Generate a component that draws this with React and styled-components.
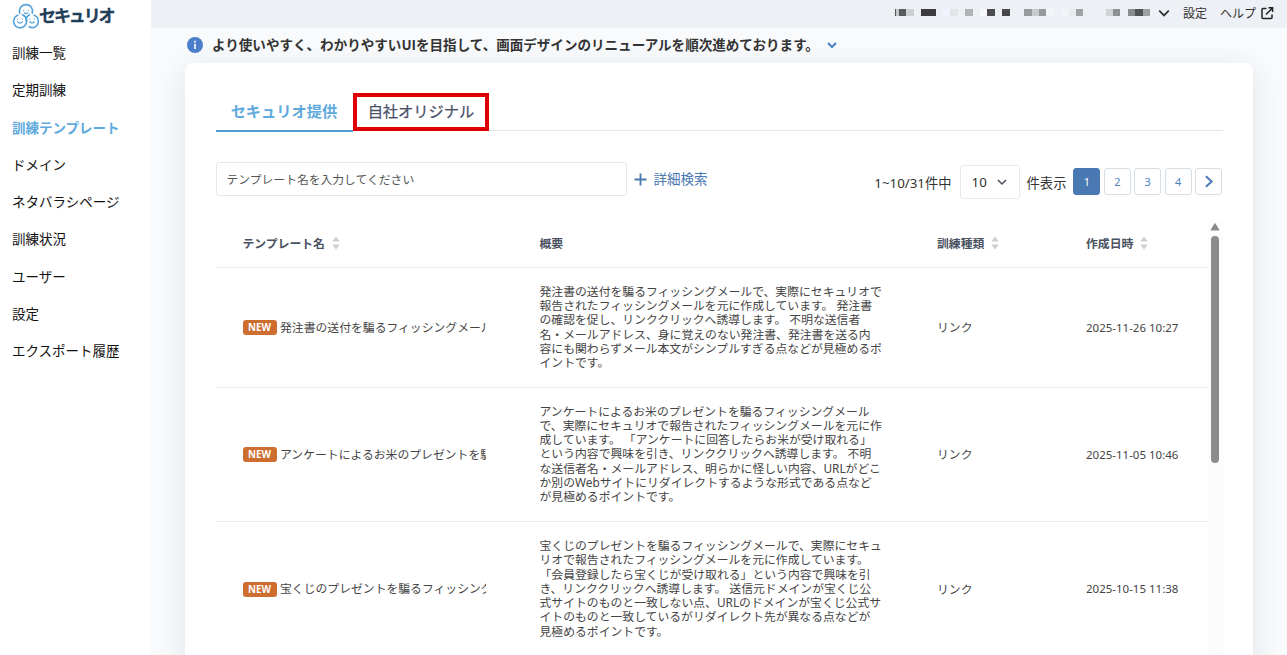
import React from "react";
import styled, { createGlobalStyle } from "styled-components";

const GlobalStyle = createGlobalStyle`
  * {
    box-sizing: border-box;
  }

  body {
    margin: 0;
    overflow: hidden;
    font-family: "Noto Sans", "Noto Sans CJK JP", sans-serif;
    color: #333;
    background-color: #f8fafc;
  }
`;

const Layout = styled.div`
  display: flex;
  height: 655px;
  overflow: hidden;
`;

const Sidebar = styled.aside`
  width: 151px;
  flex-shrink: 0;
  background-color: #fff;
`;

const Logo = styled.div`
  display: flex;
  align-items: center;
  height: 32px;
  padding: 0 0 1px 12px;
  color: #1f4059;
`;

const LogoText = styled.span`
  font-family: "Noto Sans CJK JP", sans-serif;
  font-size: 17px;
  font-weight: 700;
  letter-spacing: -2.1px;
  line-height: 24px;
  margin-left: -1px;
  padding-bottom: 2px;
  white-space: nowrap;
  -webkit-text-stroke: 0.3px #1f4059;
`;

const Nav = styled.nav`
  display: flex;
  flex-direction: column;
  padding: 2px 0 0 12px;
`;

const NavItem = styled.a`
  height: 37.25px;
  line-height: 37px;
  font-family: "Noto Sans CJK JP", sans-serif;
  font-size: 13.5px;
  font-weight: ${(props) => (props.$active ? 700 : 400)};
  color: ${(props) => (props.$active ? "#5faadd" : "#111")};
`;

const Main = styled.main`
  flex: 1;
  min-width: 0;
`;

const TopBar = styled.header`
  display: flex;
  align-items: center;
  justify-content: flex-end;
  height: 28px;
  padding: 0 13px 2px 0;
  font-size: 12px;
  line-height: 20px;
  background-color: #edf0f5;
`;

const Account = styled.div`
  display: flex;
  margin-right: 8px;
  padding-bottom: 1px;
`;

const Cell = styled.i`
  width: ${(props) => props.$w}px;
  height: 7px;
  background-color: ${(props) => props.$color};
`;

const TopLink = styled.a`
  margin: 0 ${(props) => (props.$external ? 4 : 0)}px 0 13px;
  padding-top: 1px;
`;

const Notice = styled.div`
  display: flex;
  align-items: center;
  height: 35px;
  padding: 0 0 1px 36px;
  font-size: 13.56px;
  font-weight: 700;
`;

const NoticeText = styled.span`
  margin: 0 8px 2px 9px;
  line-height: 20px;
  font-family: "Noto Sans CJK JP", sans-serif;
`;

const Card = styled.section`
  width: 1068px;
  height: 700px;
  margin-left: 34px;
  padding: 30px 31px 0 30.5px;
  border-radius: 8px;
  background-color: #fff;
  box-shadow: 0 6px 28px rgba(60, 80, 100, 0.12);
`;

const Tabs = styled.div`
  display: flex;
  height: 38px;
  width: 1007px;
  border-bottom: 1px solid #dfe6ec;
`;

const Tab = styled.button`
  width: ${(props) => (props.$marked ? 136 : 137)}px;
  height: ${(props) => (props.$marked ? 38 : 39)}px;
  padding: ${(props) => (props.$marked ? "0 0 4px 1px" : "0 0 3px")};
  border: ${(props) => (props.$marked ? "4px solid #e00000" : "none")};
  border-bottom: ${(props) => (props.$marked ? "4px solid #e00000" : "2px solid #4e9bd3")};
  background: none;
  font-family: "Noto Sans CJK JP", sans-serif;
  font-size: 15.25px;
  font-weight: ${(props) => (props.$marked ? 400 : 700)};
  -webkit-text-stroke: ${(props) => (props.$marked ? "0.25px #4a5068" : "0")};
  line-height: 20px;
  color: ${(props) => (props.$marked ? "#4a5068" : "#5faadd")};
`;

const Toolbar = styled.div`
  display: flex;
  align-items: center;
  width: 1007px;
  height: 38px;
  margin-top: 32px;
`;

const SearchInput = styled.input`
  width: 411px;
  height: 34px;
  margin-bottom: 6px;
  padding: 0 10px 2px;
  border: 1px solid #e4e9ee;
  border-radius: 3px;
  font-family: "Noto Sans CJK JP", sans-serif;
  font-size: 11.8px;

  &::placeholder {
    color: #555;
    opacity: 1;
  }
`;

const AdvancedLink = styled.a`
  display: flex;
  align-items: center;
  gap: 7px;
  margin: 0 auto 6px 7px;
  font-size: 13.5px;
  line-height: 20px;
  color: #4a78b0;
`;

const PageText = styled.span`
  padding-top: 1px;
  font-size: 13.3px;
  line-height: 20px;
`;

const PageSize = styled.div`
  display: flex;
  align-items: center;
  justify-content: space-between;
  width: 60px;
  height: 34px;
  margin: 0 7px 0 8px;
  padding: 0 12px 0 11px;
  border: 1px solid #e6eaef;
  border-radius: 3px;
  font-size: 13.3px;
`;

const Pages = styled.div`
  display: flex;
  gap: 3.4px;
  margin: 0 0.5px 1px 7px;
`;

const PageButton = styled.button`
  display: flex;
  align-items: center;
  justify-content: center;
  width: 27px;
  height: 27px;
  padding: 0;
  border: 1px solid ${(props) => (props.$active ? "#4a78b3" : "#d5dee5")};
  border-radius: 3px;
  font-family: "Noto Sans", sans-serif;
  font-size: 11px;
  color: ${(props) => (props.$active ? "#fff" : "#4f83c0")};
  background-color: ${(props) => (props.$active ? "#4a78b3" : "#fff")};
`;

const TableArea = styled.div`
  display: flex;
  width: 1007px;
  margin-top: 18px;
`;

const Table = styled.div`
  width: 992px;
`;

const Row = styled.div`
  display: grid;
  grid-template-columns: 324px 397.5px 149px 1fr;
  align-items: center;
  height: ${(props) => props.$height}px;
  border-bottom: 1px solid #e8eaec;
  font-size: 11.84px;
  color: #444;
`;

const HeadCell = styled.div`
  display: flex;
  align-items: center;
  gap: 7px;
  padding: 0 0 1px ${(props) => (props.$first ? 27 : 0)}px;
  font-family: "Noto Sans CJK JP", sans-serif;
  font-weight: 700;
  line-height: 18px;
  color: #4a5262;
`;

const NameCell = styled.div`
  display: flex;
  align-items: center;
  width: 270.5px;
  padding-left: 27px;
`;

const Badge = styled.span`
  width: 34px;
  height: 15px;
  margin-right: 3.5px;
  border-radius: 3px;
  flex-shrink: 0;
  background-color: #cd6d2f;
  color: #fff;
  font-size: 9.8px;
  font-weight: 700;
  line-height: 15px;
  text-align: center;
`;

const Name = styled.span`
  min-width: 0;
  padding-bottom: 2px;
  overflow: hidden;
  font-family: "Noto Sans CJK JP", sans-serif;
  line-height: 18px;
  white-space: nowrap;
`;

const Summary = styled.div`
  padding-bottom: 2px;
  line-height: 14.2px;
  white-space: pre;
`;

const Kind = styled.div`
  padding-bottom: 1px;
  line-height: 18px;
`;

const DateText = styled.div`
  font-size: 11.5px;
  line-height: 18px;
`;

const ScrollTrack = styled.div`
  display: flex;
  flex-direction: column;
  align-items: center;
  width: 15px;
  height: 460px;
  background-color: #fcfcfc;
`;

const ScrollThumb = styled.div`
  width: 8px;
  height: 227px;
  margin-top: 5px;
  border-radius: 4px;
  background-color: #8b8b8b;
`;

const navItems = [
  "訓練一覧",
  "定期訓練",
  "訓練テンプレート",
  "ドメイン",
  "ネタバラシページ",
  "訓練状況",
  "ユーザー",
  "設定",
  "エクスポート履歴",
];

// masked account name, one entry per block: [width, colour]
const maskCells = [
  [1, "#555"], [3, "#c4c6ca"], [7.4, "#58595c"], [7.4, "#cdcfd2"], [7, "#f0f1f4"],
  [15, "#3c3c3f"], [7.4, "#edf0f5"], [7.4, "#f1f5ff"], [7.4, "#e2e5e8"], [7.4, "#edf0f5"],
  [7.4, "#b0b2b5"], [7.4, "#edf0f5"], [7.4, "#f6f8fb"], [7.4, "#4d4d50"], [7.4, "#edf0f5"],
  [7.4, "#47474a"], [14.8, "#edf0f5"], [7.4, "#98999c"], [7.4, "#c8cacd"], [7.4, "#96999c"],
  [7.4, "#f2f5f8"], [7.4, "#edf0f5"], [7.4, "#f2f4fa"], [7.4, "#e9ebef"], [7.4, "#a1a2a5"],
  [22.2, "#eceff4"], [7.4, "#d0d2d6"], [7.4, "#8e9194"], [7.4, "#edf0f5"], [7.4, "#8a8b8e"],
  [7.4, "#515255"], [7.4, "#9d9fa3"],
];

const templates = [
  {
    name: "発注書の送付を騙るフィッシングメール",
    summary: [
      "発注書の送付を騙るフィッシングメールで、実際にセキュリオで",
      "報告されたフィッシングメールを元に作成しています。 発注書",
      "の確認を促し、リンククリックへ誘導します。 不明な送信者",
      "名・メールアドレス、身に覚えのない発注書、発注書を送る内",
      "容にも関わらずメール本文がシンプルすぎる点などが見極めるポ",
      "イントです。",
    ],
    kind: "リンク",
    date: "2025-11-26 10:27",
    height: 120,
  },
  {
    name: "アンケートによるお米のプレゼントを騙",
    summary: [
      "アンケートによるお米のプレゼントを騙るフィッシングメール",
      "で、実際にセキュリオで報告されたフィッシングメールを元に作",
      "成しています。 「アンケートに回答したらお米が受け取れる」",
      "という内容で興味を引き、リンククリックへ誘導します。 不明",
      "な送信者名・メールアドレス、明らかに怪しい内容、URLがどこ",
      "か別のWebサイトにリダイレクトするような形式である点など",
      "が見極めるポイントです。",
    ],
    kind: "リンク",
    date: "2025-11-05 10:46",
    height: 134,
  },
  {
    name: "宝くじのプレゼントを騙るフィッシング",
    summary: [
      "宝くじのプレゼントを騙るフィッシングメールで、実際にセキュ",
      "リオで報告されたフィッシングメールを元に作成しています。",
      "「会員登録したら宝くじが受け取れる」という内容で興味を引",
      "き、リンククリックへ誘導します。 送信元ドメインが宝くじ公",
      "式サイトのものと一致しない点、URLのドメインが宝くじ公式サ",
      "イトのものと一致しているがリダイレクト先が異なる点などが",
      "見極めるポイントです。",
    ],
    kind: "リンク",
    date: "2025-10-15 11:38",
    height: 135,
  },
];

// three overlapping round faces
const LogoMark = () => (
  <svg width="28" height="26" viewBox="0 0 28 26" fill="none" stroke="#55a3d9" strokeWidth="1.6" strokeLinecap="round">
    <path d="M7.7 10.2 A6.6 6.6 0 1 1 20.3 10.2" />
    <path d="M5.8 12.2 A6.6 6.6 0 0 0 4.3 23.6 A6.8 6.8 0 0 0 12.6 22.8 A6.6 6.6 0 0 0 10.5 11.8" />
    <path d="M22.2 12.2 A6.6 6.6 0 0 1 23.7 23.6 A6.8 6.8 0 0 1 17 23.8 M14 17.5 A6.6 6.6 0 0 1 17.5 11.8" />
    <path d="M12.3 10 Q14 11.2 15.7 10 M5.5 18.6 Q8 21.6 10.5 18.6 M17.7 18.8 Q20 21 22.3 18.8" strokeWidth="1.2" />
    <path d="M11.6 7.6 V7.8 M16.4 7.6 V7.8 M5.4 16 V16.2 M10.2 16 V16.2 M17.8 16 V16.2 M22.4 16 V16.2" strokeWidth="1.1" />
  </svg>
);

const Chevron = ({ size = 10, color = "#333", width = 1.5, right }) => (
  <svg width={size} height={size} viewBox="0 0 10 10" fill="none" stroke={color} strokeWidth={width}>
    <path d={right ? "M3 1 L7.4 5 L3 9" : "M1 3 L5 7 L9 3"} />
  </svg>
);

const SortIcon = () => (
  <svg width="8" height="14" viewBox="0 0 8 14" fill="#cfcfcf">
    <path d="M4 0.6 L7.8 5.6 H0.2 Z M4 13.4 L7.8 8.4 H0.2 Z" />
  </svg>
);

const App = () => {
  return (
    <>
      <GlobalStyle />
      <Layout>
        <Sidebar>
          <Logo>
            <LogoMark />
            <LogoText>セキュリオ</LogoText>
          </Logo>
          <Nav>
            {navItems.map((item) => (
              <NavItem key={item} $active={item === "訓練テンプレート"}>
                {item}
              </NavItem>
            ))}
          </Nav>
        </Sidebar>
        <Main>
          <TopBar>
            <Account>
              {maskCells.map(([w, color], i) => (
                <Cell key={i} $w={w} $color={color} />
              ))}
            </Account>
            <Chevron size={12} />
            <TopLink>設定</TopLink>
            <TopLink $external>ヘルプ</TopLink>
            <svg width="14" height="14" viewBox="0 0 14 14" fill="none" stroke="#222" strokeWidth="1.5">
              <path d="M6.5 2.4 H3 Q2 2.4 2 3.4 V11.6 Q2 12.6 3 12.6 H11 Q12 12.6 12 11.6 V8.5 M8.5 1.8 H12.6 V6 M12.4 2 L6 8.6" />
            </svg>
          </TopBar>
          <Notice>
            <svg width="16" height="16" viewBox="0 0 16 16">
              <circle cx="8" cy="8" r="8" fill="#4b7fcb" />
              <path d="M8 3.8 V5.4 M8 6.8 V12" stroke="#fff" strokeWidth="1.6" />
            </svg>
            <NoticeText>より使いやすく、わかりやすいUIを目指して、画面デザインのリニューアルを順次進めております。</NoticeText>
            <Chevron color="#4b7fcb" width={2} />
          </Notice>
          <Card>
            <Tabs>
              <Tab>セキュリオ提供</Tab>
              <Tab $marked>自社オリジナル</Tab>
            </Tabs>
            <Toolbar>
              <SearchInput placeholder="テンプレート名を入力してください" />
              <AdvancedLink>
                <svg width="13" height="13" viewBox="0 0 13 13" stroke="#4a78b0" strokeWidth="1.8">
                  <path d="M6.5 0.5 V12.5 M0.5 6.5 H12.5" />
                </svg>
                詳細検索
              </AdvancedLink>
              <PageText>1~10/31件中</PageText>
              <PageSize>
                10
                <Chevron color="#444c5c" />
              </PageSize>
              <PageText>件表示</PageText>
              <Pages>
                <PageButton $active>1</PageButton>
                <PageButton>2</PageButton>
                <PageButton>3</PageButton>
                <PageButton>4</PageButton>
                <PageButton>
                  <Chevron size={13} color="#4a78b3" right />
                </PageButton>
              </Pages>
            </Toolbar>
            <TableArea>
              <Table>
                <Row $height={49}>
                  <HeadCell $first>
                    テンプレート名
                    <SortIcon />
                  </HeadCell>
                  <HeadCell>概要</HeadCell>
                  <HeadCell>
                    訓練種類
                    <SortIcon />
                  </HeadCell>
                  <HeadCell>
                    作成日時
                    <SortIcon />
                  </HeadCell>
                </Row>
                {templates.map((template) => (
                  <Row key={template.date} $height={template.height}>
                    <NameCell>
                      <Badge>NEW</Badge>
                      <Name>{template.name}</Name>
                    </NameCell>
                    <Summary>{template.summary.join("\n")}</Summary>
                    <Kind>{template.kind}</Kind>
                    <DateText>{template.date}</DateText>
                  </Row>
                ))}
              </Table>
              <ScrollTrack>
                <svg width="10" height="12" viewBox="0 0 10 12" fill="#8b8b8b">
                  <path d="M5 4.5 L9 11 H1 Z" stroke="#8b8b8b" strokeLinejoin="round" />
                </svg>
                <ScrollThumb />
              </ScrollTrack>
            </TableArea>
          </Card>
        </Main>
      </Layout>
    </>
  );
};

export default App;
